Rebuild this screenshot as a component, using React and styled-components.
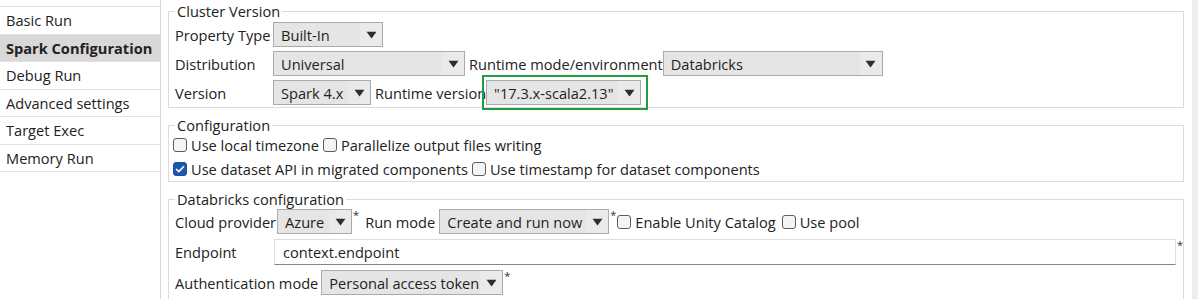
import React from "react";
import styled, { createGlobalStyle } from "styled-components";

const GlobalStyle = createGlobalStyle`
  html, body {
    margin: 0;
    padding: 0;
    background: #ffffff;
    overflow: hidden;
  }
  body {
    font-family: "Open Sans", "Noto Sans", sans-serif;
    font-size: 14.6px;
    color: #222222;
  }
`;

const Layout = styled.div`
  display: flex;
  width: 1198px;
  height: 299px;
  overflow: hidden;
`;

const Sidebar = styled.div`
  width: 160px;
  flex: none;
  border-right: 1px solid #dadada;
  padding-top: 6px;
  box-sizing: content-box;
`;

const NavItem = styled.div`
  height: 26.5px;
  display: flex;
  align-items: center;
  padding-left: 6px;
  border-bottom: 1px solid #e2e2e2;
  background: ${(p) => (p.$active ? "#d8d8d8" : "transparent")};
  font-weight: ${(p) => (p.$active ? 700 : 400)};
  white-space: nowrap;
  &:first-child {
    border-top: 1px solid #e2e2e2;
  }
`;

const Main = styled.div`
  flex: 1;
  padding: 2px 8px 0 7px;
  display: flex;
  flex-direction: column;
  gap: 8px;
  min-width: 0;
`;

const Gutter = styled.div`
  width: 6px;
  flex: none;
  background: #ededed;
`;

const Group = styled.fieldset`
  margin: 0;
  border: 1px solid #dcdcdc;
  padding: 0 2px ${(p) => p.$pb || 0}px 3px;
  display: flex;
  flex-direction: column;
  gap: ${(p) => p.$gap || 0}px;
  min-width: 0;
`;

const Legend = styled.legend`
  margin-left: 3px;
  padding: 0 2px;
  line-height: 18px;
`;

const Row = styled.div`
  display: flex;
  align-items: center;
  gap: 3px;
  height: ${(p) => p.$h || 25}px;
  padding-left: ${(p) => p.$pl || 0}px;
  white-space: nowrap;
  &:first-of-type {
    margin-top: ${(p) => p.$mt || 0}px;
  }
`;

const Label = styled.span`
  flex: none;
  width: ${(p) => (p.$w ? `${p.$w}px` : "auto")};
  margin-left: ${(p) => p.$ml || 0}px;
  margin-right: ${(p) => p.$mr || 0}px;
`;

const Select = styled.div`
  flex: none;
  display: flex;
  align-items: center;
  box-sizing: border-box;
  width: ${(p) => p.$w}px;
  height: 25px;
  border: 1px solid #ababab;
  background: #e5e5e5;
  padding-left: 7px;
  color: #1e1e1e;
`;

const SelectValue = styled.span`
  flex: 1;
  overflow: hidden;
`;

const ArrowBox = styled.span`
  width: 22px;
  height: 100%;
  display: flex;
  align-items: center;
  justify-content: center;
  background: #eaeaea;
`;

const Highlight = styled.span`
  position: relative;
  display: flex;
  &::after {
    content: "";
    position: absolute;
    top: -5px;
    bottom: -5px;
    left: -4px;
    right: -7px;
    border: 2px solid #1f9d3f;
    pointer-events: none;
  }
`;

const TextInput = styled.div`
  flex: 1;
  height: 26px;
  box-sizing: border-box;
  display: flex;
  align-items: center;
  padding-left: 8px;
  background: #ffffff;
  border: 1px solid #dedede;
  border-bottom-color: #858585;
  color: #1e1e1e;
`;

const Star = styled.span`
  align-self: flex-start;
  font-size: 11px;
  line-height: 1;
  margin: 0 -2px 0 -2px;
  color: #333333;
`;

const Check = styled.span`
  flex: none;
  width: 14px;
  height: 14px;
  box-sizing: border-box;
  border-radius: 3px;
  border: 1px solid ${(p) => (p.$on ? "#1d4f9e" : "#5c5c5c")};
  background: ${(p) => (p.$on ? "#1f56ad" : "#f4f4f4")};
  display: flex;
  align-items: center;
  justify-content: center;
  margin-left: ${(p) => (p.$ml === undefined ? 1 : p.$ml)}px;
`;

const CheckText = styled.span`
  flex: none;
  margin-left: 1px;
`;

const Arrow = () => (
  <svg width="11" height="8" viewBox="0 0 11 8">
    <path d="M0.5 0.8 L10.5 0.8 L5.5 7.5 Z" fill="#2e2e2e" />
  </svg>
);

const Dropdown = ({ w, value }) => (
  <Select $w={w}>
    <SelectValue>{value}</SelectValue>
    <ArrowBox>
      <Arrow />
    </ArrowBox>
  </Select>
);

const CheckBox = ({ on, label, ml }) => (
  <>
    <Check $on={on} $ml={ml}>
      {on && (
        <svg width="10" height="8" viewBox="0 0 10 8">
          <path d="M1 4 L3.8 6.6 L9 1.2" stroke="#ffffff" strokeWidth="1.6" fill="none" />
        </svg>
      )}
    </Check>
    <CheckText>{label}</CheckText>
  </>
);

const navItems = [
  "Basic Run",
  "Spark Configuration",
  "Debug Run",
  "Advanced settings",
  "Target Exec",
  "Memory Run",
];

export default function App() {
  return (
    <>
      <GlobalStyle />
      <Layout>
        <Sidebar>
          {navItems.map((item) => (
            <NavItem key={item} $active={item === "Spark Configuration"}>
              {item}
            </NavItem>
          ))}
        </Sidebar>
        <Main>
          <Group $gap={4} $pb={2}>
            <Legend>Cluster Version</Legend>
            <Row $pl={3} $mt={2}>
              <Label $w={95}>Property Type</Label>
              <Dropdown w={110} value="Built-In" />
            </Row>
            <Row $pl={3}>
              <Label $w={95}>Distribution</Label>
              <Dropdown w={192} value="Universal" />
              <Label $ml={1} $mr={-3}>Runtime mode/environment</Label>
              <Dropdown w={220} value="Databricks" />
            </Row>
            <Row $pl={3}>
              <Label $w={95}>Version</Label>
              <Dropdown w={98} value="Spark 4.x" />
              <Label $ml={1} $mr={-3}>Runtime version</Label>
              <Highlight>
                <Dropdown w={155} value={'"17.3.x-scala2.13"'} />
              </Highlight>
            </Row>
          </Group>

          <Group>
            <Legend>Configuration</Legend>
            <Row $h={24} $mt={-1}>
              <CheckBox label="Use local timezone" />
              <CheckBox label="Parallelize output files writing" />
            </Row>
            <Row $h={24}>
              <CheckBox on label="Use dataset API in migrated components" />
              <CheckBox label="Use timestamp for dataset components" />
            </Row>
          </Group>

          <Group $gap={5} $pb={8}>
            <Legend>Databricks configuration</Legend>
            <Row $pl={3} $mt={1}>
              <Label $mr={-2}>Cloud provider</Label>
              <Dropdown w={75} value="Azure" />
              <Star>*</Star>
              <Label $ml={5} $mr={1}>Run mode</Label>
              <Dropdown w={170} value="Create and run now" />
              <Star>*</Star>
              <CheckBox label="Enable Unity Catalog" ml={0} />
              <CheckBox label="Use pool" ml={3} />
            </Row>
            <Row $pl={3} $h={26}>
              <Label $w={96}>Endpoint</Label>
              <TextInput>context.endpoint</TextInput>
              <Star>*</Star>
            </Row>
            <Row $pl={3}>
              <Label>Authentication mode</Label>
              <Dropdown w={182} value="Personal access token" />
              <Star>*</Star>
            </Row>
          </Group>
        </Main>
        <Gutter />
      </Layout>
    </>
  );
}
